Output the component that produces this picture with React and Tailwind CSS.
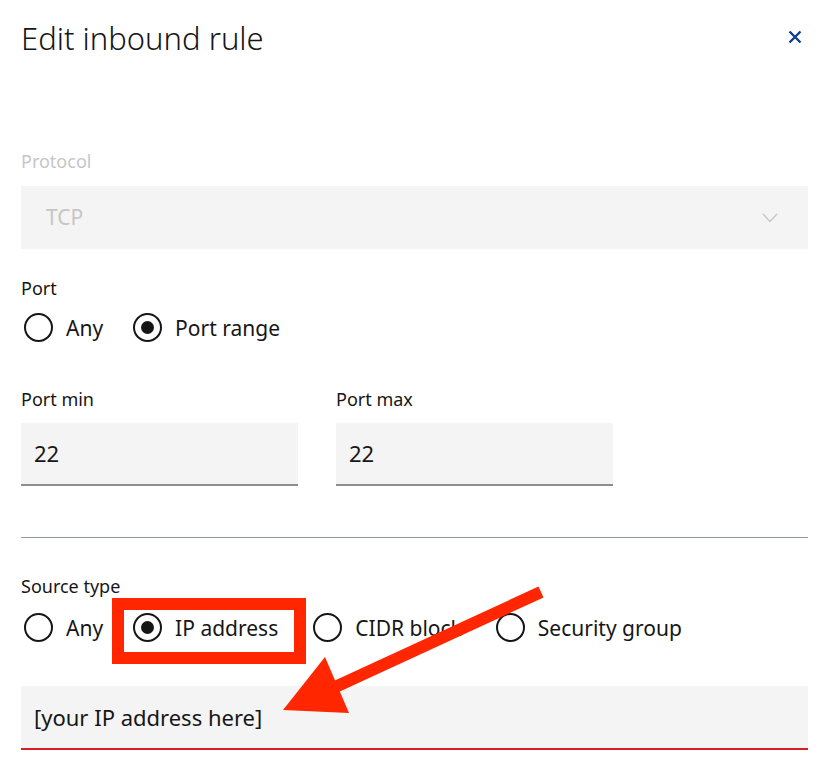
import React from "react";

const font = { fontFamily: '"Noto Sans", "Open Sans", sans-serif' };

function Radio({ checked, label, className = "" }) {
  return (
    <div className={"flex items-center gap-[13px] " + className}>
      <div className="w-[29px] h-[29px] rounded-full border-2 border-[#161616] flex items-center justify-center box-border">
        {checked && <div className="w-[13px] h-[13px] rounded-full bg-[#161616]" />}
      </div>
      <span className="text-[21px] leading-[28px] text-[#161616] whitespace-nowrap">{label}</span>
    </div>
  );
}

export default function App() {
  return (
    <div className="relative w-[837px] h-[770px] bg-white overflow-hidden" style={font}>
      <div className="pl-[21px] pr-[29px] pt-[16px]">
        <div className="flex items-start justify-between">
          <h1 className="text-[31px] leading-[44px] font-light text-[#161616]">Edit inbound rule</h1>
          <svg className="mt-[14px] mr-[6px]" width="14" height="14" viewBox="0 0 14 14">
            <path d="M1.5 1.5 L12.5 12.5 M12.5 1.5 L1.5 12.5" stroke="#0f3e8a" strokeWidth="2.4" fill="none" />
          </svg>
        </div>

        <div className="mt-[89px] text-[18px] leading-[24px] text-[#c6c6c6]">Protocol</div>
        <div className="mt-[13px] h-[63px] bg-[#f4f4f4] flex items-center justify-between pl-[25px] pr-[30px]">
          <span className="text-[21px] text-[#c6c6c6]">TCP</span>
          <svg width="16" height="10" viewBox="0 0 16 10">
            <path d="M1 1 L8 8.5 L15 1" stroke="#c6c6c6" strokeWidth="1.4" fill="none" />
          </svg>
        </div>

        <div className="mt-[27px] text-[18px] leading-[24px] text-[#161616]">Port</div>
        <div className="mt-[13px] flex items-center pl-[3px]">
          <Radio label="Any" />
          <Radio checked label="Port range" className="ml-[30px]" />
        </div>

        <div className="mt-[45px] flex gap-[38px]">
          <div className="w-[277px]">
            <div className="text-[18px] leading-[24px] text-[#161616]">Port min</div>
            <div className="mt-[12px] h-[63px] bg-[#f4f4f4] border-b-2 border-[#8d8d8d] flex items-center pl-[13px] text-[22px] text-[#161616]">22</div>
          </div>
          <div className="w-[277px]">
            <div className="text-[18px] leading-[24px] text-[#161616]">Port max</div>
            <div className="mt-[12px] h-[63px] bg-[#f4f4f4] border-b-2 border-[#8d8d8d] flex items-center pl-[13px] text-[22px] text-[#161616]">22</div>
          </div>
        </div>

        <div className="mt-[51px] h-px bg-[#8c9aa6]" />

        <div className="mt-[36px] text-[18px] leading-[24px] text-[#161616]">Source type</div>
        <div className="mt-[15px] flex items-center pl-[3px]">
          <Radio label="Any" />
          <Radio checked label="IP address" className="ml-[30px]" />
          <Radio label="CIDR block" className="ml-[35px]" />
          <Radio label="Security group" className="ml-[34px]" />
        </div>

        <div className="mt-[44px] h-[64px] bg-[#f4f4f4] border-b-2 border-[#da1e28] flex items-center pl-[13px] text-[22px] text-[#161616]">
          [your IP address here]
        </div>
      </div>

      <div className="absolute left-[112px] top-[598px] w-[194px] h-[66px] border-[12px] border-[#ff2600]" />

      <svg className="absolute left-0 top-0 pointer-events-none" width="837" height="770" viewBox="0 0 837 770">
        <line x1="541" y1="592" x2="320" y2="694" stroke="#ff2600" strokeWidth="12" />
        <polygon points="283,710 325,657 349,713" fill="#ff2600" />
      </svg>
    </div>
  );
}
